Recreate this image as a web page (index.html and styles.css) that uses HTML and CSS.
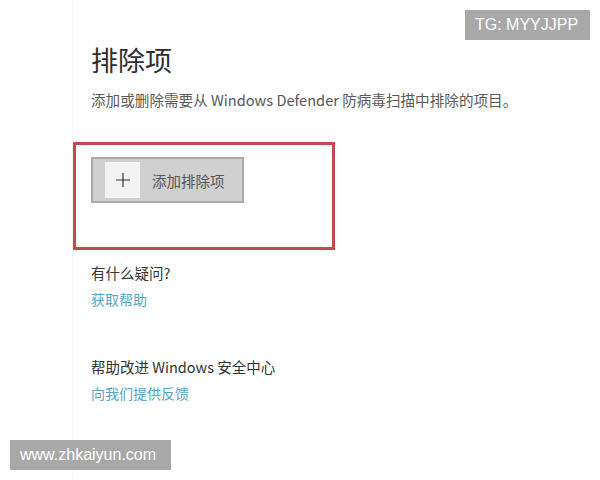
FILE: index.html
```html
<!DOCTYPE html>
<html lang="zh-CN">
<head>
<meta charset="utf-8">
<title>排除项</title>
<link rel="stylesheet" href="styles.css">
</head>
<body>
<div class="panel">
  <h1 class="title">排除项</h1>
  <p class="subtitle">添加或删除需要从 Windows Defender 防病毒扫描中排除的项目。</p>
  <div class="highlight">
    <div class="add-btn">
      <span class="plus">
        <svg width="16" height="16" viewBox="0 0 16 16"><path d="M8 1v14M1 8h14" stroke="#333" stroke-width="1.2" fill="none"/></svg>
      </span>
      <span class="add-label">添加排除项</span>
    </div>
  </div>
  <p class="q">有什么疑问?</p>
  <a class="link">获取帮助</a>
  <p class="q q2">帮助改进 Windows 安全中心</p>
  <a class="link">向我们提供反馈</a>
</div>
<div class="badge badge-tg">TG: MYYJJPP</div>
<div class="badge badge-site">www.zhkaiyun.com</div>
</body>
</html>
```

FILE: styles.css
```css
html, body {
  margin: 0;
  padding: 0;
  background: #fff;
}
body {
  width: 600px;
  height: 480px;
  overflow: hidden;
  font-family: "Noto Sans CJK SC", "Noto Sans", "Liberation Sans", sans-serif;
  color: #333;
}
.panel {
  margin-left: 72px;
  padding-top: 44px;
  height: 436px;
  border-left: 1px solid #f8f8f8;
  display: flex;
  flex-direction: column;
  align-items: flex-start;
}
.title {
  margin: 0 0 14px 18px;
  font-size: 27px;
  line-height: 32px;
  font-weight: 400;
  color: #2e2e2e;
}
.subtitle {
  margin: 0 0 32px 18px;
  font-size: 14.6px;
  line-height: 20px;
  color: #595959;
}
.highlight {
  box-sizing: border-box;
  width: 262px;
  height: 108px;
  border: 3px solid #c24a48;
  padding: 12px 0 0 15px;
  margin-bottom: 13px;
}
.add-btn {
  box-sizing: border-box;
  width: 153px;
  height: 46px;
  background: #d0d0d0;
  border: 2px solid #aaaaaa;
  display: flex;
  align-items: center;
  padding-left: 12px;
  gap: 12px;
}
.plus {
  width: 35px;
  height: 36px;
  background: #f3f3f3;
  display: flex;
  align-items: center;
  justify-content: center;
}
.add-label {
  font-size: 14.5px;
  color: #555;
}
.q {
  margin: 0 0 6px 18px;
  font-size: 14.5px;
  line-height: 20px;
  color: #333;
}
.q2 {
  margin-top: 48px;
}
.link {
  margin-left: 18px;
  font-size: 14px;
  line-height: 20px;
  color: #55a6cb;
}
.badge {
  position: absolute;
  background: #a8a8a8;
  color: #fff;
  font-family: "Liberation Sans", Arial, sans-serif;
  font-size: 16px;
  line-height: 30px;
  height: 30px;
  box-sizing: border-box;
}
.badge-tg {
  top: 10px;
  left: 465px;
  width: 125px;
  padding-left: 10px;
}
.badge-site {
  top: 440px;
  left: 10px;
  width: 161px;
  padding-left: 10px;
}
```
